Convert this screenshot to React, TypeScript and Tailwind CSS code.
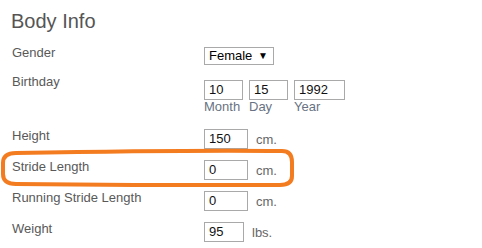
const font = { fontFamily: '"Liberation Sans", Arial, sans-serif' };

function Box({ value, w }: { value: string; w: string }) {
  return (
    <div className={`${w} h-[20px] border border-[#a9a9a9] bg-white pl-[4px] text-[13px] leading-[18px] text-[#111]`}>
      {value}
    </div>
  );
}

function Row({ label, value, w, unit }: { label: string; value: string; w: string; unit: string }) {
  return (
    <div className="flex h-[31px] items-start">
      <div className="w-[192px] text-[13px] leading-4 text-[#595959]">{label}</div>
      <div className="mt-[1px] flex items-center gap-[8px]">
        <Box value={value} w={w} />
        <span className="pt-[2px] text-[13px] leading-4 text-[#666]">{unit}</span>
      </div>
    </div>
  );
}

export default function App() {
  return (
    <div className="relative h-[248px] w-[482px] overflow-hidden bg-white pl-[12px] pt-[7px]" style={font}>
      <h1 className="-ml-[1px] text-[20px] leading-[28px] text-[#555]">Body Info</h1>

      <div className="mt-[9px] flex h-[30px] items-start">
        <div className="mt-[1px] w-[192px] text-[13px] leading-4 text-[#595959]">Gender</div>
        <div className="mt-[3px] flex h-[18px] w-[70px] items-center justify-between border border-[#a9a9a9] pl-[4px] pr-[5px] text-[13px] text-black">
          <span>Female</span>
          <span className="text-[10px] leading-none">▼</span>
        </div>
      </div>

      <div className="flex h-[54px] items-start">
        <div className="w-[192px] text-[13px] leading-4 text-[#595959]">Birthday</div>
        <div className="mt-[6px] flex gap-[6px]">
          <div className="flex flex-col">
            <Box value="10" w="w-[39px]" />
            <span className="text-[13px] leading-[13px] text-[#687282]">Month</span>
          </div>
          <div className="flex flex-col">
            <Box value="15" w="w-[39px]" />
            <span className="text-[13px] leading-[13px] text-[#687282]">Day</span>
          </div>
          <div className="flex flex-col">
            <Box value="1992" w="w-[51px]" />
            <span className="text-[13px] leading-[13px] text-[#687282]">Year</span>
          </div>
        </div>
      </div>

      <Row label="Height" value="150" w="w-[44px]" unit="cm." />
      <Row label="Stride Length" value="0" w="w-[44px]" unit="cm." />
      <Row label="Running Stride Length" value="0" w="w-[44px]" unit="cm." />
      <Row label="Weight" value="95" w="w-[40px]" unit="lbs." />

      <svg className="pointer-events-none absolute left-0 top-0" width="482" height="248" viewBox="0 0 482 248">
        <path
          d="M 16 153 C 100 151.5, 200 150, 282 151 Q 292 151 292 162 L 292 176 Q 292 185 280 185 C 200 185.5, 100 185, 16 184 Q 3 184 3 174 L 3 163 Q 3 153 16 153 Z"
          fill="none"
          stroke="#f47c20"
          strokeWidth="4"
        />
      </svg>
    </div>
  );
}
